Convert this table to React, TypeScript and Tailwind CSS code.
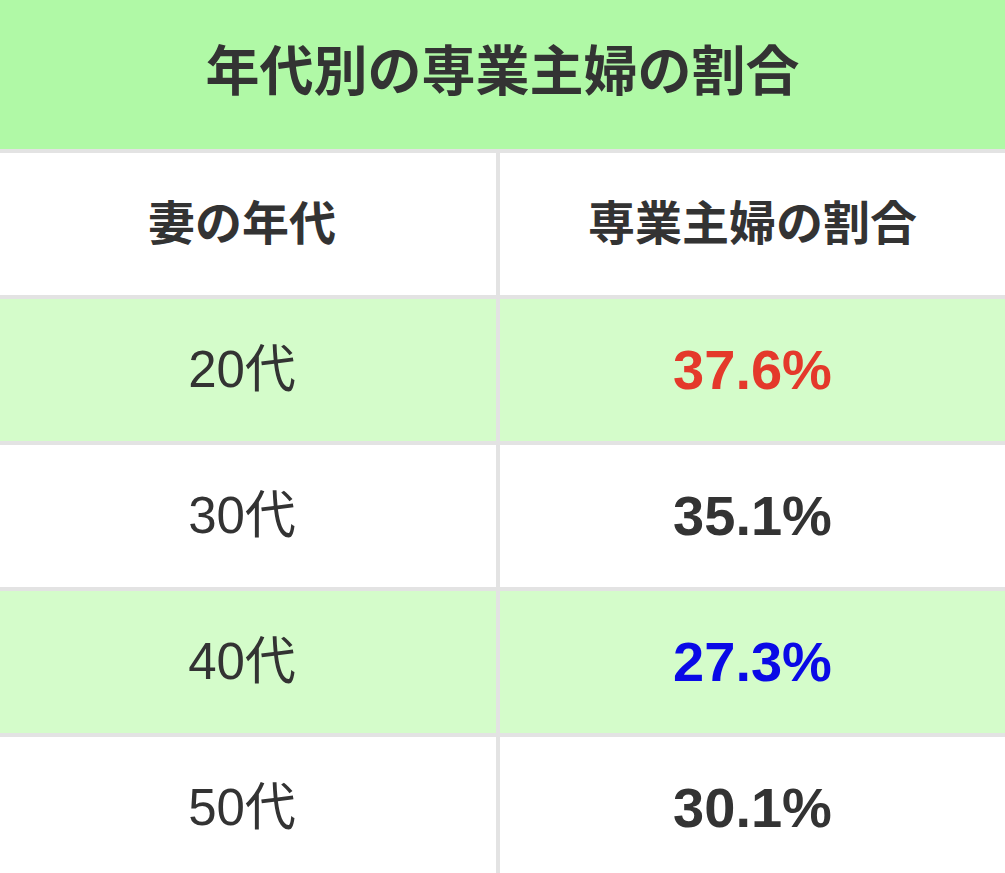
import { Fragment } from "react";

const rows = [
  { age: "20代", rate: "37.6%", color: "text-[#e4392b]", bg: "bg-[#d4fcca]" },
  { age: "30代", rate: "35.1%", color: "text-[#333333]", bg: "bg-white" },
  { age: "40代", rate: "27.3%", color: "text-[#0a0ae6]", bg: "bg-[#d4fcca]" },
  { age: "50代", rate: "30.1%", color: "text-[#333333]", bg: "bg-white" },
];

export default function App() {
  return (
    <div className="w-[1005px] h-[873px] overflow-hidden bg-white text-[#333333] font-['Liberation_Sans','Noto_Sans_CJK_JP',sans-serif]">
      <div className="h-[149px] bg-[#b0f9a6] flex items-center justify-center pb-[6px]">
        <h1 className="text-[54px] font-bold leading-none">年代別の専業主婦の割合</h1>
      </div>
      <div className="grid grid-cols-[496px_1fr] gap-[4px] bg-[#e3e3e3] pt-[4px]">
        <div className="h-[142px] bg-white flex items-center justify-center pr-[12px] text-[47px] font-bold">
          妻の年代
        </div>
        <div className="h-[142px] bg-white flex items-center justify-center text-[47px] font-bold">
          専業主婦の割合
        </div>
        {rows.map((r) => (
          <Fragment key={r.age}>
            <div className={`h-[142px] ${r.bg} flex items-center justify-center pr-[12px] text-[51px]`}>
              {r.age}
            </div>
            <div className={`h-[142px] ${r.bg} flex items-center justify-center text-[56px] font-bold ${r.color}`}>
              {r.rate}
            </div>
          </Fragment>
        ))}
      </div>
    </div>
  );
}
